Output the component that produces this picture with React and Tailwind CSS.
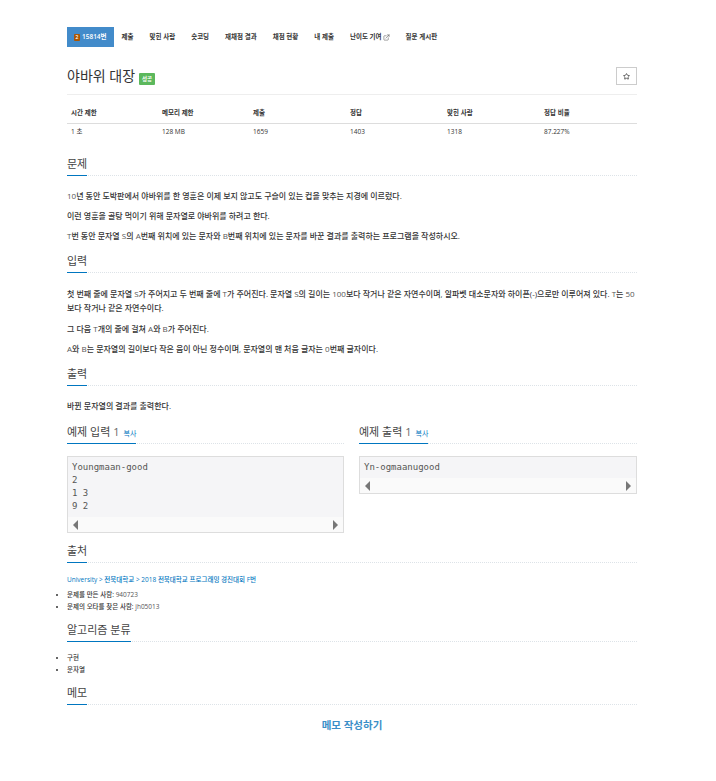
import { ExternalLink, Star } from "lucide-react";

const navItems = ["제출", "맞힌 사람", "숏코딩", "재채점 결과", "채점 현황", "내 제출"];
const stats = [
	["시간 제한", "1 초"],
	["메모리 제한", "128 MB"],
	["제출", "1659"],
	["정답", "1403"],
	["맞힌 사람", "1318"],
	["정답 비율", "87.227%"],
];

// 한글은 진하게, 영문/숫자는 얇게 보인다
function Txt({ children }) {
	return children.split(/([A-Za-z0-9]+)/).map((part, i) =>
		i % 2 ? (
			<span key={i} className="font-normal text-[#555]">
				{part}
			</span>
		) : (
			part
		),
	);
}

function Heading({ children, extra }) {
	return (
		<div className="border-b border-dotted border-[#dde3e8] h-[20px]">
			<h2 className="inline-block h-[20px] border-b border-[#0076c0] text-[11px] leading-[16px] text-[#444] font-normal whitespace-nowrap">
				{children}
				{extra}
			</h2>
		</div>
	);
}

function Scrollbar() {
	return (
		<div className="flex h-[15px] items-center justify-between bg-[#fafafa] px-[5px]">
			<span className="h-0 w-0 border-y-[5px] border-r-[5px] border-y-transparent border-r-[#777]" />
			<span className="h-0 w-0 border-y-[5px] border-l-[5px] border-y-transparent border-l-[#777]" />
		</div>
	);
}

function Sample({ title, lines }) {
	return (
		<div>
			<Heading
				extra={
					<>
						<span className="text-[#666]"> 1</span>
						<a className="ml-[4px] text-[7px] text-[#0076c0]">복사</a>
					</>
				}
			>
				{title}
			</Heading>
			<div className="mt-[12px] border border-[#ddd] bg-[#f5f5f7]">
				<pre className="px-[4px] pt-[3.5px] pb-[4.5px] font-['DejaVu_Sans_Mono',monospace] text-[9px] leading-[13px] text-[#555]">
					{lines.join("\n")}
				</pre>
				<Scrollbar />
			</div>
		</div>
	);
}

export default function App() {
	return (
		<div className="min-h-[781px] bg-white font-['Open_Sans','Noto_Sans_CJK_KR',sans-serif] text-[8px] text-[#333]">
			<div className="w-[570px] ml-[67px] pt-[27px]">
				{/* 탭 메뉴 */}
				<ul className="flex h-[20px] items-center text-[6.5px] font-semibold text-[#333] whitespace-nowrap">
					<li className="flex h-[20px] items-center gap-[2px] bg-[#428bca] px-[7px] text-white">
						<span className="flex h-[7px] w-[6px] items-center justify-center rounded-[1px] bg-[#ad5600] text-[5px] leading-none">
							2
						</span>
						15814번
					</li>
					{navItems.map((item) => (
						<li key={item} className="px-[8px]">
							{item}
						</li>
					))}
					<li className="flex items-center gap-[1px] px-[8px]">
						난이도 기여
						<ExternalLink size={7} strokeWidth={1.5} />
					</li>
					<li className="px-[8px]">질문 게시판</li>
				</ul>

				{/* 제목 */}
				<div className="mt-[20px] flex h-[28px] items-start justify-between border-b border-[#eee]">
					<div className="flex items-center gap-[4px]">
						<h1 className="text-[14px] leading-[18px] font-normal text-[#333]">
							야바위 대장
						</h1>
						<span className="mt-[5px] rounded-[1px] bg-[#5cb85c] px-[3px] py-[2px] text-[5.5px] leading-[8px] font-semibold text-white">
							성공
						</span>
					</div>
					<button className="flex h-[18px] w-[21px] items-center justify-center border border-[#ccc]">
						<Star size={7} strokeWidth={2.5} color="#333" />
					</button>
				</div>

				{/* 통계 */}
				<div className="mt-[9px] grid grid-cols-[91px_91px_97px_97px_97px_97px] text-[6.5px]">
					{stats.map(([label]) => (
						<div key={label} className="h-[20px] border-b border-[#ddd] pl-[4px] leading-[18px] font-semibold">
							{label}
						</div>
					))}
					{stats.map(([label, value]) => (
						<div key={label} className="pl-[4px] leading-[16px]">
							{value}
						</div>
					))}
				</div>

				{/* 문제 */}
				<section className="mt-[16px]">
					<Heading>문제</Heading>
					<div className="mt-[14px] flex flex-col gap-[8px] text-[8px] leading-[12px] font-medium">
						<p><Txt>10년 동안 도박판에서 야바위를 한 영훈은 이제 보지 않고도 구슬이 있는 컵을 맞추는 지경에 이르렀다.</Txt></p>
						<p><Txt>이런 영훈을 골탕 먹이기 위해 문자열로 야바위를 하려고 한다.</Txt></p>
						<p><Txt>T번 동안 문자열 S의 A번째 위치에 있는 문자와 B번째 위치에 있는 문자를 바꾼 결과를 출력하는 프로그램을 작성하시오.</Txt></p>
					</div>
				</section>

				{/* 입력 */}
				<section className="mt-[11px]">
					<Heading>입력</Heading>
					<div className="mt-[14px] flex flex-col gap-[8px] text-[8px] leading-[12px] font-medium">
						<p className="leading-[14px]"><Txt>첫 번째 줄에 문자열 S가 주어지고 두 번째 줄에 T가 주어진다. 문자열 S의 길이는 100보다 작거나 같은 자연수이며, 알파벳 대소문자와 하이픈(-)으로만 이루어져 있다. T는 50보다 작거나 같은 자연수이다.</Txt></p>
						<p><Txt>그 다음 T개의 줄에 걸쳐 A와 B가 주어진다.</Txt></p>
						<p><Txt>A와 B는 문자열의 길이보다 작은 음이 아닌 정수이며, 문자열의 맨 처음 글자는 0번째 글자이다.</Txt></p>
					</div>
				</section>

				{/* 출력 */}
				<section className="mt-[11px]">
					<Heading>출력</Heading>
					<p className="mt-[14px] text-[8px] leading-[12px] font-medium">바뀐 문자열의 결과를 출력한다.</p>
				</section>

				{/* 예제 */}
				<div className="mt-[12px] grid grid-cols-[277px_278px] gap-x-[15px] items-start">
					<Sample title="예제 입력" lines={["Youngmaan-good", "2", "1 3", "9 2"]} />
					<Sample title="예제 출력" lines={["Yn-ogmaanugood"]} />
				</div>

				{/* 출처 */}
				<section className="mt-[10px]">
					<Heading>출처</Heading>
					<p className="mt-[12px] text-[6.5px] leading-[10px] font-medium text-[#0076c0]">
						<span className="font-normal">University &gt;</span> 전북대학교 <span className="font-normal">&gt; 2018</span> 전북대학교 프로그래밍 경진대회 F번
					</p>
					<ul className="mt-[4px] list-[square] text-[6.5px] leading-[12px] font-medium marker:text-[#666]">
						<li><Txt>문제를 만든 사람: 940723</Txt></li>
						<li><Txt>문제의 오타를 찾은 사람: jh05013</Txt></li>
					</ul>
				</section>

				{/* 알고리즘 분류 */}
				<section className="mt-[9px]">
					<Heading>알고리즘 분류</Heading>
					<ul className="mt-[10px] list-[square] text-[6.5px] leading-[12px] font-medium marker:text-[#666]">
						<li>구현</li>
						<li>문자열</li>
					</ul>
				</section>

				{/* 메모 */}
				<section className="mt-[9px]">
					<Heading>메모</Heading>
					<div className="mt-[13px] text-center text-[10.5px] leading-[14px] font-semibold text-[#3a8fc8]">
						메모 작성하기
					</div>
				</section>
			</div>
		</div>
	);
}
